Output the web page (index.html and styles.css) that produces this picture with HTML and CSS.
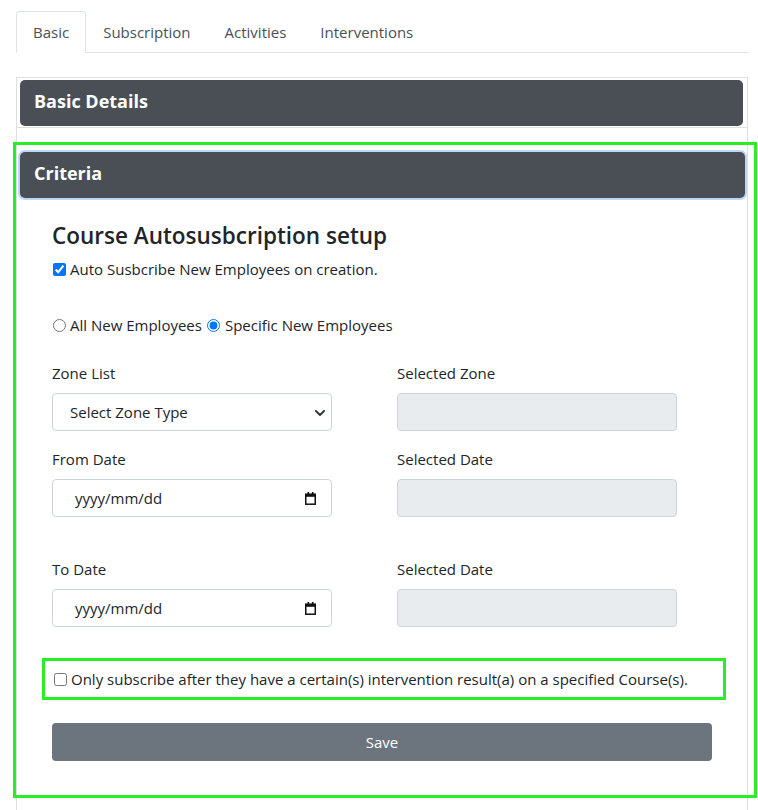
FILE: index.html
```html
<!DOCTYPE html>
<html lang="en">
<head>
<meta charset="utf-8">
<title>Course Autosubscription</title>
<link rel="stylesheet" href="styles.css">
</head>
<body>
  <nav class="tabs">
    <span class="tab active">Basic</span>
    <span class="tab">Subscription</span>
    <span class="tab">Activities</span>
    <span class="tab">Interventions</span>
  </nav>

  <div class="card">
    <div class="item first">
      <div class="bar">Basic Details</div>
    </div>

    <div class="highlight">
      <div class="bar focused">Criteria</div>

      <div class="body">
        <h4 class="title">Course Autosusbcription setup</h4>
        <label class="check-row">
          <input type="checkbox" checked>
          <span>Auto Susbcribe New Employees on creation.</span>
        </label>

        <div class="radio-row">
          <label class="radio"><input type="radio" name="emp"><span>All New Employees</span></label>
          <label class="radio second"><input type="radio" name="emp" checked><span>Specific New Employees</span></label>
        </div>

        <div class="grid row-zone">
          <div class="field">
            <div class="label">Zone List</div>
            <div class="control select">
              <span>Select Zone Type</span>
              <svg class="chev" width="10" height="6" viewBox="0 0 10 6"><path d="M1 1l4 4 4-4" fill="none" stroke="#343a40" stroke-width="2" stroke-linecap="round" stroke-linejoin="round"/></svg>
            </div>
          </div>
          <div class="field">
            <div class="label">Selected Zone</div>
            <div class="control disabled"></div>
          </div>
        </div>

        <div class="grid row-from">
          <div class="field">
            <div class="label">From Date</div>
            <div class="control date">
              <span>yyyy/mm/dd</span>
              <svg class="cal" width="11" height="13" viewBox="0 0 11 13"><rect x="2.5" y="0" width="1.6" height="3" fill="#111"/><rect x="6.9" y="0" width="1.6" height="3" fill="#111"/><rect x="0.75" y="2.2" width="9.5" height="10" fill="none" stroke="#111" stroke-width="1.5"/><rect x="0.75" y="2.2" width="9.5" height="2.6" fill="#111"/></svg>
            </div>
          </div>
          <div class="field">
            <div class="label">Selected Date</div>
            <div class="control disabled"></div>
          </div>
        </div>

        <div class="grid row-to">
          <div class="field">
            <div class="label">To Date</div>
            <div class="control date">
              <span>yyyy/mm/dd</span>
              <svg class="cal" width="11" height="13" viewBox="0 0 11 13"><rect x="2.5" y="0" width="1.6" height="3" fill="#111"/><rect x="6.9" y="0" width="1.6" height="3" fill="#111"/><rect x="0.75" y="2.2" width="9.5" height="10" fill="none" stroke="#111" stroke-width="1.5"/><rect x="0.75" y="2.2" width="9.5" height="2.6" fill="#111"/></svg>
            </div>
          </div>
          <div class="field">
            <div class="label">Selected Date</div>
            <div class="control disabled"></div>
          </div>
        </div>

        <label class="check-row boxed">
          <input type="checkbox">
          <span>Only subscribe after they have a certain(s) intervention result(a) on a specified Course(s).</span>
        </label>

        <button class="save" type="button">Save</button>
      </div>
    </div>
  </div>
</body>
</html>
```

FILE: styles.css
```css
* { box-sizing: border-box; }

html, body { background: #fff; }

body {
  margin: 0;
  padding: 11px 10px 0 16px;
  font-family: "Open Sans", "Noto Sans", sans-serif;
  font-size: 15px;
  line-height: 24px;
  color: #212529;
  overflow: hidden;
  height: 810px;
}

.tabs {
  display: flex;
  border-bottom: 1px solid #dee2e6;
}

.tab {
  padding: 8px 16px;
  border: 1px solid transparent;
  border-radius: 4px 4px 0 0;
  margin-bottom: -1px;
  color: #495057;
}

.tab.active {
  border-color: #dee2e6 #dee2e6 #fff;
  background: #fff;
}

.card {
  margin-top: 24px;
  border: 1px solid #dfdfdf;
  border-bottom: none;
  height: 740px;
}

.item.first {
  border-bottom: 1px solid #dfdfdf;
  padding: 2px 4px 1px 3px;
}

.bar {
  height: 46px;
  background: #4a4f56;
  border-radius: 5px;
  color: #fff;
  font-size: 18px;
  font-weight: 700;
  display: flex;
  align-items: center;
  padding: 0 0 4px 14px;
}

.bar.focused {
  box-shadow: 0 0 0 2px #bcd6f8;
}

.highlight {
  margin: 14px -10px 0 -4px;
  border: 3px solid #27ee27;
  padding: 7px 9px 34px 4px;
}

.body {
  padding: 0 0 0 32px;
  width: 692px;
}

.title {
  margin: 23px 0 7px;
  font-size: 22.5px;
  line-height: 29px;
  font-weight: 600;
}

.check-row {
  display: flex;
  align-items: center;
}

.check-row input,
.radio input {
  width: 13px;
  height: 13px;
  margin: 0 4px 0 1px;
  accent-color: #0075ff;
}

.radio-row {
  display: flex;
  align-items: center;
  margin-top: 32px;
}

.radio {
  display: flex;
  align-items: center;
}

.radio.second input {
  margin-left: 5px;
  margin-right: 5px;
}

.grid {
  display: grid;
  grid-template-columns: 345px 315px;
}

.row-zone { margin-top: 24px; }
.row-from { margin-top: 16px; }
.row-to { margin-top: 40px; }

.label {
  margin-bottom: 8px;
}

.control {
  width: 280px;
  height: 38px;
  border: 1px solid #ced4da;
  border-radius: 4px;
  display: flex;
  align-items: center;
  justify-content: space-between;
}

.control.disabled {
  background: #e9ecef;
}

.control.select {
  padding: 0 6px 0 17px;
}

.control.date {
  padding: 0 15px 0 22px;
}

.chev { margin-top: 1px; }

.check-row.boxed {
  margin: 31px -14px 0 -10px;
  border: 3px solid #27ee27;
  padding: 6px 8px;
}

.save {
  display: block;
  margin-top: 23px;
  width: 660px;
  height: 38px;
  border: none;
  border-radius: 4px;
  background: #6c757d;
  color: #fff;
  font-family: inherit;
  font-size: 15px;
}
```
